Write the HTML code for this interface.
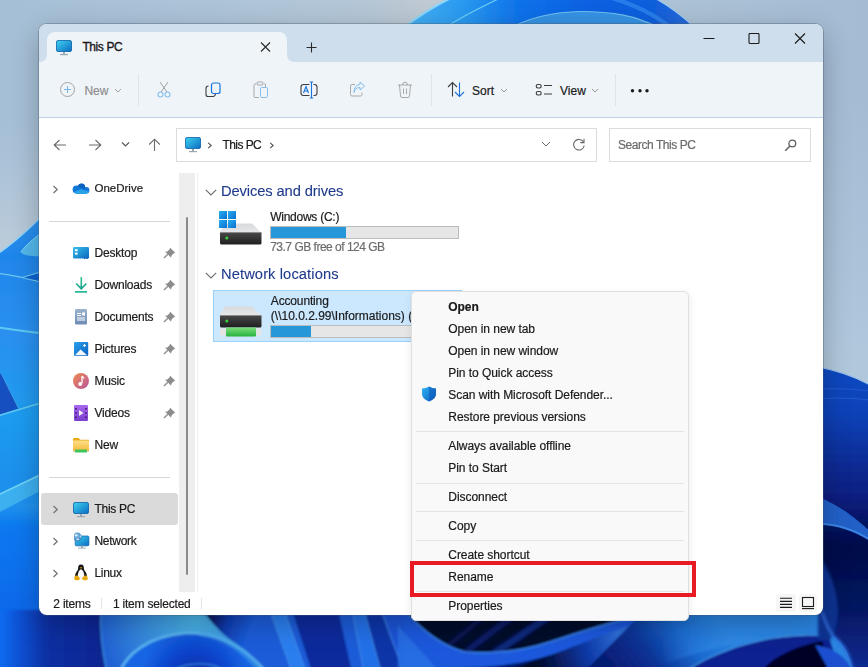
<!DOCTYPE html><html><head><meta charset="utf-8"><style>
html,body{margin:0;padding:0}
body{width:868px;height:667px;overflow:hidden;position:relative;font-family:"Liberation Sans", sans-serif;background:#a9c1d7}
.a{position:absolute}
.t{position:absolute;white-space:nowrap;-webkit-text-stroke:0.2px currentColor}
</style></head><body><svg class="a" style="left:0;top:0" width="868" height="667" viewBox="0 0 868 667">
<defs>
<linearGradient id="bg" gradientUnits="userSpaceOnUse" x1="0" y1="0" x2="868" y2="0">
<stop offset="0" stop-color="#a7c0d7"/><stop offset="0.3" stop-color="#aec3d8"/><stop offset="0.46" stop-color="#c2cad2"/><stop offset="0.8" stop-color="#b4c4d2"/><stop offset="1" stop-color="#a5bfd7"/>
</linearGradient>
<linearGradient id="bgv" gradientUnits="userSpaceOnUse" x1="0" y1="0" x2="0" y2="667">
<stop offset="0" stop-color="#a3bed7"/><stop offset="0.55" stop-color="#aec6dc"/><stop offset="1" stop-color="#aec6dc"/>
</linearGradient>
<radialGradient id="bgr" gradientUnits="userSpaceOnUse" cx="430" cy="8" r="70">
<stop offset="0" stop-color="#c0cad3" stop-opacity="1"/><stop offset="0.6" stop-color="#bac7d3" stop-opacity="0.6"/><stop offset="1" stop-color="#b0c4d6" stop-opacity="0"/>
</radialGradient>
<linearGradient id="topg" gradientUnits="userSpaceOnUse" x1="405" y1="0" x2="692" y2="0">
<stop offset="0" stop-color="#46b2f4"/><stop offset="0.2" stop-color="#2a9af0"/><stop offset="0.4" stop-color="#0f72ea"/><stop offset="0.65" stop-color="#0a60e0"/><stop offset="0.85" stop-color="#0d5edc"/><stop offset="1" stop-color="#2a6ad8"/>
</linearGradient>
<linearGradient id="leftg" gradientUnits="userSpaceOnUse" x1="0" y1="215" x2="0" y2="615">
<stop offset="0" stop-color="#2e94f0"/><stop offset="0.1" stop-color="#1f86ea"/><stop offset="0.3" stop-color="#2a90f0"/><stop offset="0.5" stop-color="#1e9cf0"/><stop offset="0.65" stop-color="#1a90ec"/><stop offset="0.73" stop-color="#2090ee"/><stop offset="0.78" stop-color="#0a78f0"/><stop offset="1" stop-color="#0868ea"/>
</linearGradient>
<linearGradient id="botL" gradientUnits="userSpaceOnUse" x1="0" y1="0" x2="104" y2="0">
<stop offset="0" stop-color="#0a6cf0"/><stop offset="0.15" stop-color="#0a56da"/><stop offset="0.45" stop-color="#0a30a2"/><stop offset="1" stop-color="#0a2590"/>
</linearGradient>
<linearGradient id="petA" gradientUnits="userSpaceOnUse" x1="104" y1="0" x2="270" y2="0">
<stop offset="0" stop-color="#2260d0"/><stop offset="0.35" stop-color="#3a9ce0"/><stop offset="0.6" stop-color="#40a6e4"/><stop offset="1" stop-color="#1a60e0"/>
</linearGradient>
<linearGradient id="petB" gradientUnits="userSpaceOnUse" x1="0" y1="634" x2="0" y2="667">
<stop offset="0" stop-color="#0a4ad8"/><stop offset="1" stop-color="#0c48d0"/>
</linearGradient>
<linearGradient id="rightg" gradientUnits="userSpaceOnUse" x1="0" y1="368" x2="0" y2="667">
<stop offset="0" stop-color="#1048c0"/><stop offset="0.15" stop-color="#0e42b8"/><stop offset="0.3" stop-color="#0a2e98"/><stop offset="0.43" stop-color="#081e80"/><stop offset="0.6" stop-color="#040c48"/><stop offset="0.8" stop-color="#061660"/><stop offset="1" stop-color="#0a2a90"/>
</linearGradient>
<linearGradient id="brightband" gradientUnits="userSpaceOnUse" x1="570" y1="667" x2="640" y2="621">
<stop offset="0" stop-color="#061a70"/><stop offset="0.4" stop-color="#2a70e0"/><stop offset="0.55" stop-color="#3a80e8"/><stop offset="0.6" stop-color="#061a70"/><stop offset="1" stop-color="#061a70"/>
</linearGradient>
<linearGradient id="lightR" gradientUnits="userSpaceOnUse" x1="610" y1="672" x2="700" y2="600">
<stop offset="0" stop-color="#061a70"/><stop offset="0.35" stop-color="#0a3294"/><stop offset="0.7" stop-color="#1a6ad0"/><stop offset="1" stop-color="#2a84e0"/>
</linearGradient>
<linearGradient id="leftE" gradientUnits="userSpaceOnUse" x1="540" y1="672" x2="620" y2="640">
<stop offset="0" stop-color="#02082a"/><stop offset="0.6" stop-color="#0e3aa8"/><stop offset="1" stop-color="#2e6ed8"/>
</linearGradient>
<filter id="soft3" x="-5%" y="-50%" width="110%" height="200%"><feGaussianBlur stdDeviation="1.3"/></filter>
<linearGradient id="wedgeG" gradientUnits="userSpaceOnUse" x1="206" y1="612" x2="250" y2="630">
<stop offset="0" stop-color="#040a40"/><stop offset="0.5" stop-color="#0f3cb0"/><stop offset="1" stop-color="#1a5cd8"/>
</linearGradient>
<linearGradient id="bgl" gradientUnits="userSpaceOnUse" x1="0" y1="120" x2="0" y2="260">
<stop offset="0" stop-color="#b6c9db" stop-opacity="0"/><stop offset="1" stop-color="#bfcdda" stop-opacity="1"/>
</linearGradient>
<radialGradient id="petAr" gradientUnits="userSpaceOnUse" cx="195" cy="618" r="95">
<stop offset="0" stop-color="#4ab4e6"/><stop offset="0.45" stop-color="#3a94e0"/><stop offset="1" stop-color="#2262d4"/>
</radialGradient>
<radialGradient id="petBr" gradientUnits="userSpaceOnUse" cx="195" cy="680" r="55">
<stop offset="0" stop-color="#0a2a9a"/><stop offset="0.5" stop-color="#0c40c8"/><stop offset="1" stop-color="#1666e4"/>
</radialGradient>
<linearGradient id="bgh" gradientUnits="userSpaceOnUse" x1="0" y1="0" x2="868" y2="0">
<stop offset="0" stop-color="#a5bfd6"/><stop offset="0.25" stop-color="#adc4d8"/><stop offset="0.4" stop-color="#b3c6d7"/><stop offset="0.48" stop-color="#b9c7d3"/><stop offset="0.8" stop-color="#abc1d5"/><stop offset="1" stop-color="#a3bcd4"/>
</linearGradient>
<linearGradient id="bgrs" gradientUnits="userSpaceOnUse" x1="0" y1="100" x2="0" y2="390">
<stop offset="0" stop-color="#b0c8dc" stop-opacity="0"/><stop offset="1" stop-color="#b2c9dd" stop-opacity="1"/>
</linearGradient>
<linearGradient id="lightV" gradientUnits="userSpaceOnUse" x1="0" y1="615" x2="0" y2="660">
<stop offset="0" stop-color="#2a80e0" stop-opacity="0"/><stop offset="1" stop-color="#3c94ec" stop-opacity="0.9"/>
</linearGradient>
<linearGradient id="mHg" gradientUnits="userSpaceOnUse" x1="660" y1="0" x2="730" y2="0">
<stop offset="0" stop-color="#fff" stop-opacity="0"/><stop offset="1" stop-color="#fff" stop-opacity="1"/>
</linearGradient>
<mask id="mH" maskUnits="userSpaceOnUse" x="0" y="0" width="868" height="667"><rect x="0" y="0" width="868" height="667" fill="url(#mHg)"/></mask>
<filter id="soft" x="-5%" y="-5%" width="110%" height="110%"><feGaussianBlur stdDeviation="0.6"/></filter>
<filter id="soft2" x="-20%" y="-20%" width="140%" height="140%"><feGaussianBlur stdDeviation="1.5"/></filter>
</defs>
<rect width="868" height="667" fill="url(#bgh)"/>
<rect x="800" y="100" width="68" height="290" fill="url(#bgrs)"/>
<rect width="868" height="667" fill="url(#bgr)"/>
<rect x="0" y="120" width="60" height="140" fill="url(#bgl)"/>
<g filter="url(#soft)">
<!-- ===== top dome ===== -->
<path d="M403 28 C416 18 430 8 451 -2 L655 -2 C672 8 684 17 695 28 Z" fill="url(#topg)"/>
<path d="M403 28 C416 18 430 8 451 -2" fill="none" stroke="#8cd6f8" stroke-width="2"/>
<path d="M655 -2 C672 8 684 17 695 28" fill="none" stroke="#a0cdf0" stroke-width="1.2"/>
<path d="M500 -2 C484 6 466 14 446 27" fill="none" stroke="#6ed0f5" stroke-width="1.3"/>
<path d="M612 -2 C638 6 655 15 670 27" fill="none" stroke="#2f84ee" stroke-width="4" opacity="0.8"/>
<path d="M512 27 C530 18 550 12 580 11.5 C615 11.5 635 16 658 27 Z" fill="#3592e4"/>
<path d="M512 27 C530 18 550 12 580 11.5 C615 11.5 635 16 658 27" fill="none" stroke="#70bff0" stroke-width="1.2"/>
<!-- ===== left ===== -->
<path d="M-4 255 C10 246 26 232 44 214 L44 620 L-4 620 Z" fill="url(#leftg)"/>
<path d="M-4 255 C10 246 26 232 44 214" fill="none" stroke="#8fd4f6" stroke-width="1.3"/>
<path d="M44 231 C34 238 25 246 21 252 C22 255.5 32 256.5 44 256.5 Z" fill="#52b8ec"/>
<path d="M44 231 C34 238 25 246 21 252" fill="none" stroke="#8adaf8" stroke-width="1"/>
<path d="M22 277.5 L44 271 L44 283 Z" fill="#0c62d2"/>
<path d="M-4 273 C10 275 18 276 24 278 C30 279.5 36 281 44 282.5 M22 277.5 L44 271" fill="none" stroke="#6cc8f0" stroke-width="1.2"/>
<path d="M-4 327 C15 330 28 332 44 333.5" fill="none" stroke="#5ccbf0" stroke-width="1.8"/>
<path d="M-4 371 L2 375 L18.5 408.5 L-4 416 Z" fill="#1450c0"/>
<path d="M2 375 L18.5 408.5" fill="none" stroke="#5ab8f0" stroke-width="0.8" opacity="0.7"/>
<path d="M-4 416.5 L44 402" fill="none" stroke="#60c8f0" stroke-width="1.6"/>
<path d="M-4 496 L44 473 L44 489 L-4 514 Z" fill="#3eb0f0"/>
<path d="M-4 496 L44 473" fill="none" stroke="#70d2f5" stroke-width="1.6"/>
<!-- ===== bottom ===== -->
</g>
<g filter="url(#soft3)">
<rect x="-4" y="610" width="876" height="62" fill="#0a2a98"/>
<rect x="-4" y="610" width="110" height="62" fill="url(#botL)"/>
<!-- petal A -->
<path d="M101 610 C100 630 102 650 107 672 L300 672 L300 610 Z" fill="url(#petAr)"/>
<path d="M101 610 C100 630 102 650 107 672" fill="none" stroke="#3a88e0" stroke-width="1.5"/>
<!-- blue region right of petal A -->
<path d="M202 610 C210 620 218 630 228 638 C242 648 255 658 266 672 L345 672 L338 610 Z" fill="url(#wedgeG)"/>
<!-- petal B -->
<path d="M120 672 C126 655 148 636 185 633 C210 632 228 640 245 652 C253 658 260 665 266 672 Z" fill="url(#petBr)"/>
<path d="M170 672 C185 662 210 660 228 672" fill="none" stroke="#3a90e8" stroke-width="1.2"/>
<path d="M120 672 C126 655 148 636 185 633 C210 632 228 640 245 652 C253 658 260 665 266 672" fill="none" stroke="#5ab8f0" stroke-width="2.5"/>
<path d="M200 633 C225 636 245 650 262 672" fill="none" stroke="#46a4e8" stroke-width="6" opacity="0.5"/>
<!-- stripes -->
<path d="M270 610 L284 610 L306 672 L292 672 Z" fill="#2a7eee"/>
<path d="M292 610 L338 610 L352 672 L312 672 Z" fill="#0a2c9c"/>
<path d="M338 610 L352 610 L364 672 L352 672 Z" fill="#1a5cd8"/>
<path d="M352 610 L364 610 L381 672 L364 672 Z" fill="#2270e8"/>
<path d="M364 610 L381 610 L404 672 L381 672 Z" fill="#0c34a8"/>
<path d="M381 610 L412 610 L440 672 L404 672 Z" fill="#1a52d4"/>
<path d="M270 610 L292 672 M284 610 L306 672 M352 610 L364 672 M364 610 L381 672 M381 610 L404 672" fill="none" stroke="#4a98f0" stroke-width="1.2" opacity="0.7"/>
<!-- right part base -->
<rect x="405" y="610" width="467" height="62" fill="#061a70"/>
<path d="M404 610 L645 610 L645 616 C610 622 580 632 550 642 C520 652 490 654 465 652 C440 646 420 628 404 610 Z" fill="#02082a"/>
<g filter="url(#soft2)">
<path d="M445 648 C458 638 470 628 484 616" fill="none" stroke="#0a1c66" stroke-width="5" opacity="0.7"/>
<path d="M466 652 C480 641 496 628 514 616" fill="none" stroke="#0e2a84" stroke-width="6" opacity="0.75"/>
<path d="M494 653 C512 642 530 628 550 616" fill="none" stroke="#143aa6" stroke-width="7" opacity="0.7"/>
</g>
<!-- region left of edge E below band -->
<path d="M500 672 C540 660 590 640 645 612 L584 672 Z" fill="url(#leftE)"/>
<!-- blue band -->
<path d="M404 610 C420 628 440 646 465 652 C490 654 520 652 550 642 C580 632 610 622 645 614 L636 624 C600 634 570 650 540 658 C510 666 480 668 450 668 L420 672 L404 672 Z" fill="#1c58dc"/>
<path d="M404 610 C420 628 440 646 465 652 C490 654 520 652 550 642 C580 632 610 622 645 614" fill="none" stroke="#3a80e8" stroke-width="1.5"/>
<path d="M398 625 C410 640 425 655 440 672 L398 672 Z" fill="#2a72e4" opacity="0.8"/>
<!-- right of edge E -->
<path d="M645 610 L872 610 L872 672 L584 672 Z" fill="url(#lightR)"/>
<path d="M640 672 C700 650 740 642 770 636 C800 632 815 632 829 634 L829 612 L660 612 Z" fill="url(#lightV)" mask="url(#mH)"/>
<path d="M685 672 C710 655 740 645 770 639 C800 635 815 635 829 637" fill="none" stroke="#4a9cec" stroke-width="2"/>
<path d="M685 672 C710 655 740 645 770 639 C800 635 815 635 829 637 L840 672 Z" fill="#0a2090"/>
<path d="M760 672 C775 655 800 645 822 641 L835 672 Z" fill="#020626"/>
<path d="M815 645 C835 648 848 658 852 672 L830 672 Z" fill="#1a50d0"/>
</g>
<g filter="url(#soft)">
<!-- ===== right ===== -->
<path d="M818 367 C835 370 852 375 872 386 L872 672 L853 672 C851 658 846 648 838 640 C830 634 826 625 818 600 Z" fill="url(#rightg)"/>
<path d="M818 367 C835 370 852 375 872 386" fill="none" stroke="#9cc4ec" stroke-width="1.2"/>
<path d="M818 389 C840 388 855 389 872 391 M818 399 C840 397 855 398 872 400" fill="none" stroke="#2a62d0" stroke-width="1.2" opacity="0.6"/>
<path d="M818 497 C840 505 858 520 872 533 L872 541 C855 530 840 525 818 523 Z" fill="#2060c8"/>
<path d="M818 523.5 C840 525 855 530 872 541" fill="none" stroke="#3a84e4" stroke-width="2"/>
<path d="M818 556 C830 570 838 590 838 612 C838 625 834 634 830 640 L818 640 Z" fill="#0a3090" filter="url(#soft2)"/>
<path d="M822 612 C826 625 830 634 838 640 C846 648 851 658 853 672" fill="none" stroke="#2f6ad8" stroke-width="2.5" filter="url(#soft2)"/>
</g>
</svg>

<div class="a" style="left:39px;top:24px;width:784px;height:591px;background:#ffffff;border-radius:8px;box-shadow:0 0 0 1px rgba(70,90,110,0.38),0 8px 28px rgba(0,0,0,0.26);overflow:hidden"></div>
<div class="a" style="left:39px;top:24px;width:784px;height:38px;background:#cedeec;border-radius:8px 8px 0 0"></div>
<div class="a" style="left:39px;top:62px;width:784px;height:56px;background:#eff4f9"></div>
<div class="a" style="left:39px;top:117px;width:784px;height:1px;background:#c0d0e0"></div>
<div class="a" style="left:47px;top:32px;width:240px;height:31px;background:#eff4f9;border-radius:8px 8px 0 0"></div>
<svg class="a" style="left:39px;top:54px;" width="8" height="8" viewBox="0 0 8 8"><path d="M0 8 L8 8 L8 0 Q8 8 0 8 Z" fill="#eff4f9"/></svg>
<svg class="a" style="left:287px;top:54px;" width="8" height="8" viewBox="0 0 8 8"><path d="M0 0 L0 8 L8 8 Q0 8 0 0 Z" fill="#eff4f9"/></svg>
<svg class="a" style="left:56px;top:40px;" width="16" height="16" viewBox="0 0 16 16"><defs><linearGradient id="mg5640" x1="0" y1="0" x2="1" y2="1"><stop offset="0" stop-color="#3fd3ee"/><stop offset="1" stop-color="#0b6cc4"/></linearGradient></defs>
<rect x="0.5" y="0.5" width="15" height="11" rx="1.5" fill="url(#mg5640)" stroke="#0a5fa8" stroke-width="0.8"/>
<rect x="7.0" y="12" width="2" height="2" fill="#9aa8b4"/><rect x="4.0" y="14" width="8" height="1.2" fill="#9aa8b4"/></svg>
<div class="t" style="left:82.4px;top:41.44px;font-size:12px;line-height:12px;color:#1a1a1a;font-weight:normal;letter-spacing:-0.4px;-webkit-text-stroke:0.35px #1a1a1a">This PC</div>
<svg class="a" style="left:260px;top:42px;" width="11" height="10" viewBox="0 0 11 10"><path d="M1 0.5 L10 9.5 M10 0.5 L1 9.5" stroke="#2a2a2a" stroke-width="1.1"/></svg>
<svg class="a" style="left:306px;top:42px;" width="11" height="11" viewBox="0 0 11 11"><path d="M5.5 0.5 V10.5 M0.5 5.5 H10.5" stroke="#2a2a2a" stroke-width="1.1"/></svg>
<svg class="a" style="left:703px;top:37px;" width="12" height="3" viewBox="0 0 12 3"><path d="M0.5 1.5 H11.5" stroke="#1a1a1a" stroke-width="1"/></svg>
<svg class="a" style="left:748px;top:33px;" width="12" height="11" viewBox="0 0 12 11"><rect x="1" y="0.5" width="10" height="10" rx="1" fill="none" stroke="#1a1a1a" stroke-width="1.1"/></svg>
<svg class="a" style="left:794px;top:33px;" width="12" height="11" viewBox="0 0 12 11"><path d="M1 0.5 L11 10.5 M11 0.5 L1 10.5" stroke="#1a1a1a" stroke-width="1.1"/></svg>
<svg class="a" style="left:59px;top:81px;" width="17" height="17" viewBox="0 0 17 17"><circle cx="8.5" cy="8.5" r="7" fill="none" stroke="#a3a3a3" stroke-width="1"/><path d="M8.5 5 V12 M5 8.5 H12" stroke="#7ab4e6" stroke-width="1"/></svg>
<div class="t" style="left:84.4px;top:85.04px;font-size:12px;line-height:12px;color:#8f8f8f;font-weight:normal;">New</div>
<svg class="a" style="left:114px;top:88px;" width="8" height="5" viewBox="0 0 8 5"><path d="M1 1 L4 4 L7 1" fill="none" stroke="#9a9a9a" stroke-width="0.9"/></svg>
<div class="a" style="left:138px;top:74px;width:1px;height:32px;background:#dfe4ea"></div>
<svg class="a" style="left:156px;top:81px;" width="16" height="17" viewBox="0 0 16 17"><path d="M4 1 L11 11 M12 1 L5 11" stroke="#a0a0a0" stroke-width="1"/><circle cx="4.5" cy="13.5" r="2.5" fill="none" stroke="#86bdeb" stroke-width="1.1"/><circle cx="11.5" cy="13.5" r="2.5" fill="none" stroke="#86bdeb" stroke-width="1.1"/></svg>
<svg class="a" style="left:205px;top:82px;" width="16" height="16" viewBox="0 0 16 16"><path d="M3.5 4 Q1 4 1 6.5 V12.5 Q1 14.5 3 14.5 H8 Q10 14.5 10.5 12" fill="none" stroke="#3c3c3c" stroke-width="1.1"/><rect x="6.5" y="1" width="8.5" height="10.5" rx="2" fill="none" stroke="#1a73d9" stroke-width="1.2"/></svg>
<svg class="a" style="left:253px;top:81px;" width="16" height="18" viewBox="0 0 16 18"><path d="M3 3 H2 Q1 3 1 4.5 V15.5 Q1 16.5 2 16.5 H6 M11 3 H12 Q12.5 3 12.5 4 V6" fill="none" stroke="#a8a8a8" stroke-width="1"/><rect x="4" y="1" width="6" height="3" rx="1" fill="none" stroke="#a8a8a8" stroke-width="1"/><rect x="7.5" y="6.5" width="7" height="10" rx="1.2" fill="none" stroke="#86bdeb" stroke-width="1"/></svg>
<svg class="a" style="left:300px;top:81px;" width="18" height="18" viewBox="0 0 18 18"><path d="M9.5 3.5 H3.5 Q1 3.5 1 6 V12 Q1 14.5 3.5 14.5 H9.5 M13.5 3.5 H14.5 Q17 3.5 17 6 V12 Q17 14.5 14.5 14.5 H13.5" fill="none" stroke="#3c3c3c" stroke-width="1.1"/><path d="M3.5 12 L6 5.5 L8.5 12 M4.3 10 H7.7" fill="none" stroke="#1a73d9" stroke-width="1.1"/><path d="M11.5 1 V17 M9.8 1 H13.2 M9.8 17 H13.2" stroke="#1a73d9" stroke-width="1.1"/></svg>
<svg class="a" style="left:349px;top:81px;" width="17" height="17" viewBox="0 0 17 17"><path d="M6 3.5 H3 Q1.5 3.5 1.5 5 V13.5 Q1.5 15 3 15 H11.5 Q13 15 13 13.5 V11.5" fill="none" stroke="#a8a8a8" stroke-width="1"/><path d="M5 11.5 Q6 6.5 11 6.5 V9 L15.5 5 L11 1 V3.5 Q5 4 5 11.5 Z" fill="none" stroke="#86bdeb" stroke-width="1"/></svg>
<svg class="a" style="left:397px;top:81px;" width="16" height="18" viewBox="0 0 16 18"><path d="M1 4 H15 M5.5 4 Q5.5 1.2 8 1.2 Q10.5 1.2 10.5 4 M2.5 4 L3.5 15 Q3.7 16.5 5 16.5 H11 Q12.3 16.5 12.5 15 L13.5 4 M6.5 7.5 V13 M9.5 7.5 V13" fill="none" stroke="#a8a8a8" stroke-width="1"/></svg>
<div class="a" style="left:431px;top:74px;width:1px;height:32px;background:#dfe4ea"></div>
<svg class="a" style="left:447px;top:81px;" width="19" height="17" viewBox="0 0 19 17"><path d="M5.5 15.5 V1.5 M1 6 L5.5 1.5 L10 6" fill="none" stroke="#3c3c3c" stroke-width="1.1"/><path d="M12.5 1.5 V15.5 M8 11 L12.5 15.5 L17 11" fill="none" stroke="#1a73d9" stroke-width="1.1"/></svg>
<div class="t" style="left:472px;top:85.04px;font-size:12px;line-height:12px;color:#1b1b1b;font-weight:normal;">Sort</div>
<svg class="a" style="left:500px;top:88px;" width="8" height="5" viewBox="0 0 8 5"><path d="M1 1 L4 4 L7 1" fill="none" stroke="#8a8a8a" stroke-width="0.9"/></svg>
<svg class="a" style="left:535px;top:83px;" width="18" height="14" viewBox="0 0 18 14"><rect x="1.2" y="1.5" width="5" height="3.5" rx="1.7" fill="none" stroke="#3c3c3c" stroke-width="1.1"/><rect x="1.2" y="8.5" width="5" height="3.5" rx="1.7" fill="none" stroke="#3c3c3c" stroke-width="1.1"/><path d="M9 2.5 H17 M9 11 H17" stroke="#3c3c3c" stroke-width="1.1"/></svg>
<div class="t" style="left:560px;top:85.04px;font-size:12px;line-height:12px;color:#1b1b1b;font-weight:normal;">View</div>
<svg class="a" style="left:591px;top:88px;" width="8" height="5" viewBox="0 0 8 5"><path d="M1 1 L4 4 L7 1" fill="none" stroke="#8a8a8a" stroke-width="0.9"/></svg>
<div class="a" style="left:615px;top:74px;width:1px;height:32px;background:#dfe4ea"></div>
<svg class="a" style="left:629px;top:88px;" width="22" height="6" viewBox="0 0 22 6"><circle cx="3.5" cy="2.8" r="1.7" fill="#1b1b1b"/><circle cx="11" cy="2.8" r="1.7" fill="#1b1b1b"/><circle cx="18" cy="2.8" r="1.7" fill="#1b1b1b"/></svg>
<svg class="a" style="left:53px;top:139px;" width="14" height="12" viewBox="0 0 14 12"><path d="M13 6 H1.5 M6.5 1 L1.2 6 L6.5 11" fill="none" stroke="#6a6a6a" stroke-width="1.1"/></svg>
<svg class="a" style="left:88px;top:139px;" width="14" height="12" viewBox="0 0 14 12"><path d="M1 6 H12.5 M7.5 1 L12.8 6 L7.5 11" fill="none" stroke="#6a6a6a" stroke-width="1.1"/></svg>
<svg class="a" style="left:121px;top:141px;" width="9" height="7" viewBox="0 0 9 7"><path d="M1 1.5 L4.5 5 L8 1.5" fill="none" stroke="#5a5a5a" stroke-width="1.2"/></svg>
<svg class="a" style="left:148px;top:138px;" width="13" height="14" viewBox="0 0 13 14"><path d="M6.5 13 V1.5 M1.2 6.5 L6.5 1.2 L11.8 6.5" fill="none" stroke="#6a6a6a" stroke-width="1.1"/></svg>
<div class="a" style="left:176px;top:128px;width:421px;height:34px;background:#fff;border:1px solid #dcdcdc;box-sizing:border-box"></div>
<svg class="a" style="left:185px;top:137px;" width="16" height="16" viewBox="0 0 16 16"><defs><linearGradient id="mg185137" x1="0" y1="0" x2="1" y2="1"><stop offset="0" stop-color="#3fd3ee"/><stop offset="1" stop-color="#0b6cc4"/></linearGradient></defs>
<rect x="0.5" y="0.5" width="15" height="11" rx="1.5" fill="url(#mg185137)" stroke="#0a5fa8" stroke-width="0.8"/>
<rect x="7.0" y="12" width="2" height="2" fill="#9aa8b4"/><rect x="4.0" y="14" width="8" height="1.2" fill="#9aa8b4"/></svg>
<svg class="a" style="left:207px;top:142px;" width="6" height="7" viewBox="0 0 6 7"><path d="M1.2 0.8 L4.2 3.5 L1.2 6.2" fill="none" stroke="#505050" stroke-width="1.1"/></svg>
<div class="t" style="left:222.4px;top:138.64px;font-size:12px;line-height:12px;color:#1b1b1b;font-weight:normal;letter-spacing:-0.55px">This PC</div>
<svg class="a" style="left:269px;top:142px;" width="6" height="7" viewBox="0 0 6 7"><path d="M1.2 0.8 L4.2 3.5 L1.2 6.2" fill="none" stroke="#505050" stroke-width="1.1"/></svg>
<svg class="a" style="left:541px;top:141px;" width="10" height="6" viewBox="0 0 10 6"><path d="M1 1 L5 5 L9 1" fill="none" stroke="#6a6a6a" stroke-width="1"/></svg>
<svg class="a" style="left:572px;top:138px;" width="14" height="13" viewBox="0 0 14 13"><path d="M11.5 4 A5.3 5.3 0 1 0 12.2 7.5" fill="none" stroke="#6a6a6a" stroke-width="1.1"/><path d="M12 0.8 V4.6 H8.2" fill="none" stroke="#6a6a6a" stroke-width="1.1"/></svg>
<div class="a" style="left:609px;top:128px;width:202px;height:34px;background:#fff;border:1px solid #dcdcdc;box-sizing:border-box"></div>
<div class="t" style="left:618px;top:138.64px;font-size:12px;line-height:12px;color:#6b6b6b;font-weight:normal;letter-spacing:-0.45px">Search This PC</div>
<svg class="a" style="left:784px;top:139px;" width="13" height="13" viewBox="0 0 13 13"><circle cx="8.3" cy="4.5" r="3.4" fill="none" stroke="#606060" stroke-width="1.3"/><path d="M6 7 L1.2 11.8" stroke="#606060" stroke-width="1.5"/></svg>
<div class="a" style="left:179px;top:173px;width:16px;height:419px;background:#eeeeee"></div>
<div class="a" style="left:196.5px;top:173px;width:1px;height:419px;background:#f0f0f0"></div>
<div class="a" style="left:186px;top:217px;width:2px;height:358px;background:#8a8a8a;border-radius:1px"></div>
<svg class="a" style="left:52px;top:185.0px;" width="7" height="9" viewBox="0 0 7 9"><path d="M1.5 1 L5.2 4.5 L1.5 8" fill="none" stroke="#767676" stroke-width="1.3"/></svg>
<svg class="a" style="left:72px;top:183px;" width="18" height="12" viewBox="0 0 18 12"><defs><clipPath id="odc"><circle cx="4.6" cy="6.6" r="4"/><circle cx="9.4" cy="4.2" r="3.8"/><circle cx="14.2" cy="7.3" r="3.2"/><rect x="4.6" y="6" width="9.6" height="4.9"/></clipPath></defs><g clip-path="url(#odc)"><rect x="0" y="0" width="18" height="12" fill="#1078d6"/><path d="M5 3 L9 0 L14 2 L12.5 6.6 Z" fill="#0a62be"/><path d="M0 10 L8.6 6.2 L18 8.8 L18 12 L0 12 Z" fill="#2aa2ea"/></g></svg>
<div class="t" style="left:94.5px;top:182.97px;font-size:11.5px;line-height:11.5px;color:#1b1b1b;font-weight:normal;">OneDrive</div>
<div class="a" style="left:49px;top:221px;width:121px;height:1px;background:#d6d6d6"></div>
<div class="t" style="left:94.5px;top:246.84px;font-size:12px;line-height:12px;color:#1b1b1b;font-weight:normal;letter-spacing:-0.2px">Desktop</div>
<svg class="a" style="left:163px;top:247px;" width="13" height="12" viewBox="0 0 13 12"><path d="M7.2 0.8 L12.2 5.8 L10.6 6.6 L8.4 8.8 L8.2 10.8 L2.2 4.8 L4.2 4.6 L6.4 2.4 Z" fill="#8c8c8c"/><path d="M4.8 7.2 L1 11" stroke="#8c8c8c" stroke-width="1.3"/></svg>
<div class="t" style="left:94.5px;top:278.84px;font-size:12px;line-height:12px;color:#1b1b1b;font-weight:normal;letter-spacing:-0.2px">Downloads</div>
<svg class="a" style="left:163px;top:279px;" width="13" height="12" viewBox="0 0 13 12"><path d="M7.2 0.8 L12.2 5.8 L10.6 6.6 L8.4 8.8 L8.2 10.8 L2.2 4.8 L4.2 4.6 L6.4 2.4 Z" fill="#8c8c8c"/><path d="M4.8 7.2 L1 11" stroke="#8c8c8c" stroke-width="1.3"/></svg>
<div class="t" style="left:94.5px;top:310.84px;font-size:12px;line-height:12px;color:#1b1b1b;font-weight:normal;letter-spacing:-0.2px">Documents</div>
<svg class="a" style="left:163px;top:311px;" width="13" height="12" viewBox="0 0 13 12"><path d="M7.2 0.8 L12.2 5.8 L10.6 6.6 L8.4 8.8 L8.2 10.8 L2.2 4.8 L4.2 4.6 L6.4 2.4 Z" fill="#8c8c8c"/><path d="M4.8 7.2 L1 11" stroke="#8c8c8c" stroke-width="1.3"/></svg>
<div class="t" style="left:94.5px;top:342.84px;font-size:12px;line-height:12px;color:#1b1b1b;font-weight:normal;letter-spacing:-0.2px">Pictures</div>
<svg class="a" style="left:163px;top:343px;" width="13" height="12" viewBox="0 0 13 12"><path d="M7.2 0.8 L12.2 5.8 L10.6 6.6 L8.4 8.8 L8.2 10.8 L2.2 4.8 L4.2 4.6 L6.4 2.4 Z" fill="#8c8c8c"/><path d="M4.8 7.2 L1 11" stroke="#8c8c8c" stroke-width="1.3"/></svg>
<div class="t" style="left:94.5px;top:374.84px;font-size:12px;line-height:12px;color:#1b1b1b;font-weight:normal;letter-spacing:-0.2px">Music</div>
<svg class="a" style="left:163px;top:375px;" width="13" height="12" viewBox="0 0 13 12"><path d="M7.2 0.8 L12.2 5.8 L10.6 6.6 L8.4 8.8 L8.2 10.8 L2.2 4.8 L4.2 4.6 L6.4 2.4 Z" fill="#8c8c8c"/><path d="M4.8 7.2 L1 11" stroke="#8c8c8c" stroke-width="1.3"/></svg>
<div class="t" style="left:94.5px;top:406.84px;font-size:12px;line-height:12px;color:#1b1b1b;font-weight:normal;letter-spacing:-0.2px">Videos</div>
<svg class="a" style="left:163px;top:407px;" width="13" height="12" viewBox="0 0 13 12"><path d="M7.2 0.8 L12.2 5.8 L10.6 6.6 L8.4 8.8 L8.2 10.8 L2.2 4.8 L4.2 4.6 L6.4 2.4 Z" fill="#8c8c8c"/><path d="M4.8 7.2 L1 11" stroke="#8c8c8c" stroke-width="1.3"/></svg>
<div class="t" style="left:94.5px;top:438.84px;font-size:12px;line-height:12px;color:#1b1b1b;font-weight:normal;letter-spacing:-0.2px">New</div>
<svg class="a" style="left:73px;top:247px;" width="16" height="12" viewBox="0 0 16 12"><defs><linearGradient id="dk" x1="0" y1="0" x2="1" y2="1"><stop offset="0" stop-color="#36c0ea"/><stop offset="1" stop-color="#0a66c0"/></linearGradient></defs><rect x="0" y="0" width="16" height="11.5" rx="1.2" fill="url(#dk)"/><rect x="2" y="2.2" width="2.6" height="2" fill="#fff"/><rect x="2" y="5.6" width="2.6" height="2" fill="#fff"/><rect x="11" y="11" width="1.2" height="1" fill="#0a4f9a"/><rect x="13.5" y="11" width="1.2" height="1" fill="#0a4f9a"/></svg>
<svg class="a" style="left:75px;top:277px;" width="13" height="16" viewBox="0 0 13 16"><defs><linearGradient id="dl" x1="0" y1="0" x2="0" y2="1"><stop offset="0" stop-color="#2fc49a"/><stop offset="1" stop-color="#14a08a"/></linearGradient></defs><path d="M6.3 0 V11 M1.2 6.5 L6.3 11.8 L11.4 6.5" fill="none" stroke="url(#dl)" stroke-width="1.6"/><rect x="0" y="14" width="12" height="1.7" fill="#22b894"/></svg>
<svg class="a" style="left:75px;top:309px;" width="12" height="16" viewBox="0 0 12 16"><defs><linearGradient id="dc" x1="0" y1="0" x2="0" y2="1"><stop offset="0" stop-color="#9bb3cf"/><stop offset="1" stop-color="#6d8cb4"/></linearGradient></defs><rect x="0" y="0" width="12" height="15.5" rx="1.3" fill="url(#dc)"/><rect x="2" y="4" width="4" height="1" fill="#fff"/><rect x="2" y="6" width="4" height="1" fill="#fff"/><rect x="7" y="3.5" width="3" height="3" fill="#fff"/><rect x="2" y="8.5" width="8" height="1" fill="#fff"/><rect x="2" y="10.5" width="8" height="1" fill="#fff"/></svg>
<svg class="a" style="left:74px;top:342px;" width="15" height="14" viewBox="0 0 15 14"><defs><linearGradient id="pc" x1="0" y1="0" x2="1" y2="1"><stop offset="0" stop-color="#2aa0ec"/><stop offset="1" stop-color="#0a62c0"/></linearGradient></defs><rect x="0" y="0" width="14.2" height="14" rx="1.3" fill="url(#pc)"/><path d="M1 13.2 L6.5 7.5 L13.2 13.2 Z" fill="#f4f8fc"/><circle cx="10.5" cy="3.5" r="1.1" fill="#fff"/><path d="M10.5 2 V5 M9 3.5 H12" stroke="#fff" stroke-width="0.7"/></svg>
<svg class="a" style="left:73px;top:373px;" width="16" height="16" viewBox="0 0 16 16"><defs><linearGradient id="mu" x1="0" y1="0" x2="1" y2="1"><stop offset="0" stop-color="#f08a4e"/><stop offset="1" stop-color="#b8559e"/></linearGradient></defs><circle cx="8" cy="8" r="8" fill="url(#mu)"/><path d="M9 3.2 V10.5" stroke="#fff" stroke-width="1.3"/><path d="M9 3.2 Q10.5 4.5 11.2 5.5" stroke="#fff" stroke-width="1.2" fill="none"/><circle cx="7.2" cy="11" r="1.9" fill="#fff"/></svg>
<svg class="a" style="left:74px;top:405px;" width="14" height="16" viewBox="0 0 14 16"><defs><linearGradient id="vd" x1="0" y1="0" x2="0" y2="1"><stop offset="0" stop-color="#a766ee"/><stop offset="1" stop-color="#7a3ecf"/></linearGradient></defs><rect x="0" y="0" width="14" height="16" rx="1.3" fill="url(#vd)"/><g fill="#3a1f66"><rect x="1.2" y="3" width="1.6" height="1.6"/><rect x="1.2" y="7.2" width="1.6" height="1.6"/><rect x="1.2" y="11.4" width="1.6" height="1.6"/><rect x="11.2" y="3" width="1.6" height="1.6"/><rect x="11.2" y="7.2" width="1.6" height="1.6"/><rect x="11.2" y="11.4" width="1.6" height="1.6"/></g><path d="M5 5 L9.5 8 L5 11 Z" fill="#f0f0f0"/></svg>
<svg class="a" style="left:73px;top:438px;" width="16" height="15" viewBox="0 0 16 15"><defs><linearGradient id="fd" x1="0" y1="0" x2="0" y2="1"><stop offset="0" stop-color="#fde08a"/><stop offset="1" stop-color="#f5bb3a"/></linearGradient></defs><path d="M0 1.2 Q0 0 1.2 0 H5.5 L7.2 1.8 H16 V12.5 H0 Z" fill="#eaa813"/><rect x="0" y="2.5" width="16" height="10.5" rx="0.8" fill="url(#fd)"/><rect x="0" y="13" width="16" height="0.8" fill="#c8c8c8"/><rect x="2" y="11.6" width="12" height="3" rx="0.6" fill="#3fc45d"/></svg>
<div class="a" style="left:49px;top:477px;width:121px;height:1px;background:#d6d6d6"></div>
<div class="a" style="left:41px;top:493px;width:137px;height:32px;background:#dadada;border-radius:3px"></div>
<svg class="a" style="left:52px;top:504.5px;" width="7" height="9" viewBox="0 0 7 9"><path d="M1.5 1 L5.2 4.5 L1.5 8" fill="none" stroke="#767676" stroke-width="1.3"/></svg>
<div class="t" style="left:94.5px;top:502.84px;font-size:12px;line-height:12px;color:#1b1b1b;font-weight:normal;letter-spacing:-0.3px">This PC</div>
<svg class="a" style="left:52px;top:536.5px;" width="7" height="9" viewBox="0 0 7 9"><path d="M1.5 1 L5.2 4.5 L1.5 8" fill="none" stroke="#767676" stroke-width="1.3"/></svg>
<div class="t" style="left:94.5px;top:534.84px;font-size:12px;line-height:12px;color:#1b1b1b;font-weight:normal;letter-spacing:-0.3px">Network</div>
<svg class="a" style="left:52px;top:568.5px;" width="7" height="9" viewBox="0 0 7 9"><path d="M1.5 1 L5.2 4.5 L1.5 8" fill="none" stroke="#767676" stroke-width="1.3"/></svg>
<div class="t" style="left:94.5px;top:566.84px;font-size:12px;line-height:12px;color:#1b1b1b;font-weight:normal;letter-spacing:-0.3px">Linux</div>
<svg class="a" style="left:73px;top:502px;" width="16" height="16" viewBox="0 0 16 16"><defs><linearGradient id="mg73502" x1="0" y1="0" x2="1" y2="1"><stop offset="0" stop-color="#3fd3ee"/><stop offset="1" stop-color="#0b6cc4"/></linearGradient></defs>
<rect x="0.5" y="0.5" width="15" height="11" rx="1.5" fill="url(#mg73502)" stroke="#0a5fa8" stroke-width="0.8"/>
<rect x="7.0" y="12" width="2" height="2" fill="#9aa8b4"/><rect x="4.0" y="14" width="8" height="1.2" fill="#9aa8b4"/></svg>
<svg class="a" style="left:74px;top:531px;" width="16" height="18" viewBox="0 0 16 18"><defs><linearGradient id="nm" x1="0" y1="0" x2="1" y2="1"><stop offset="0" stop-color="#3fd3ee"/><stop offset="1" stop-color="#0b6cc4"/></linearGradient><radialGradient id="gl" cx="0.4" cy="0.35" r="0.7"><stop offset="0" stop-color="#8cc4ea"/><stop offset="1" stop-color="#2a78b8"/></radialGradient></defs><rect x="1.2" y="5" width="13.7" height="9.8" rx="1.2" fill="url(#nm)" stroke="#0a5fa8" stroke-width="0.7"/><rect x="7" y="14.8" width="2" height="2" fill="#9aa8b4"/><rect x="4.2" y="16.6" width="7.6" height="1" fill="#9aa8b4"/><circle cx="3.4" cy="6" r="4.4" fill="url(#gl)"/><ellipse cx="2.2" cy="4.2" rx="1.6" ry="1" fill="#e6f2fa" opacity="0.85"/><ellipse cx="3.8" cy="8.3" rx="1.5" ry="0.9" fill="#e6f2fa" opacity="0.85"/><ellipse cx="6.5" cy="5.5" rx="0.8" ry="1.2" fill="#e6f2fa" opacity="0.7"/></svg>
<svg class="a" style="left:74px;top:564px;" width="14" height="17" viewBox="0 0 14 17"><path d="M7 0.6 C9.2 0.6 9.9 2.2 9.9 4.2 C9.9 5.6 10.6 6.6 11.6 8.1 C12.9 10.1 13.2 12.2 12.5 14.2 L1.5 14.2 C0.8 12.2 1.1 10.1 2.4 8.1 C3.4 6.6 4.1 5.6 4.1 4.2 C4.1 2.2 4.8 0.6 7 0.6 Z" fill="#161616"/><path d="M7 5.2 C8.7 6 9.9 8.2 10.2 10.6 C10.4 12.6 9.9 14.2 8.8 14.8 L5.2 14.8 C4.1 14.2 3.6 12.6 3.8 10.6 C4.1 8.2 5.3 6 7 5.2 Z" fill="#fbfbfb"/><path d="M5.6 3.6 Q7 2.8 8.4 3.6 Q7 5.4 5.6 3.6 Z" fill="#e6a815"/><path d="M0.2 14.4 C0.3 12.2 1.8 11.2 3.4 11.7 C4.6 12.2 5.6 13.6 6 14.8 C5.2 16.2 3.1 16.6 1.6 16.1 C0.6 15.7 0.1 15.2 0.2 14.4 Z" fill="#e8a80c"/><path d="M13.8 14.4 C13.7 12.2 12.2 11.2 10.6 11.7 C9.4 12.2 8.4 13.6 8 14.8 C8.8 16.2 10.9 16.6 12.4 16.1 C13.4 15.7 13.9 15.2 13.8 14.4 Z" fill="#e8a80c"/></svg>
<svg class="a" style="left:204.5px;top:188.8px;" width="12" height="7" viewBox="0 0 12 7"><path d="M0.8 0.8 L6 6 L11.2 0.8" fill="none" stroke="#6e6e6e" stroke-width="1.15"/></svg>
<div class="t" style="left:221px;top:184.36px;font-size:14.7px;line-height:14.7px;color:#1e3a8c;font-weight:normal;letter-spacing:-0.1px;-webkit-text-stroke:0.1px #1e3a8c">Devices and drives</div>
<svg class="a" style="left:219px;top:223px;" width="43" height="22" viewBox="0 0 43 22"><defs><linearGradient id="dt223" x1="0" y1="0" x2="0" y2="1"><stop offset="0" stop-color="#d7d9dc"/><stop offset="1" stop-color="#e6e7e9"/></linearGradient><linearGradient id="df223" x1="0" y1="0" x2="0" y2="1"><stop offset="0" stop-color="#4a4a4a"/><stop offset="1" stop-color="#1f1f1f"/></linearGradient></defs><path d="M6 0.5 H33 L41.5 9 H1 Z" fill="url(#dt223)"/><rect x="1" y="9" width="41.5" height="12.5" rx="1.5" fill="url(#df223)"/><rect x="1" y="9" width="41.5" height="1" fill="#8a8a8a"/><circle cx="7.8" cy="15" r="1.5" fill="#34d33a"/></svg>
<svg class="a" style="left:219px;top:211px;" width="17" height="17" viewBox="0 0 17 17"><defs><linearGradient id="wl" x1="0" y1="0" x2="1" y2="1"><stop offset="0" stop-color="#28aef0"/><stop offset="1" stop-color="#0a6fd0"/></linearGradient></defs><g fill="url(#wl)"><rect x="0" y="0" width="8" height="8"/><rect x="9" y="0" width="8" height="8"/><rect x="0" y="9" width="8" height="8"/><rect x="9" y="9" width="8" height="8"/></g></svg>
<div class="t" style="left:270.2px;top:210.74px;font-size:12px;line-height:12px;color:#1b1b1b;font-weight:normal;letter-spacing:-0.25px">Windows (C:)</div>
<div class="a" style="left:269.5px;top:226px;width:189px;height:13px;background:#e6e6e6;border:1px solid #bcbcbc;box-sizing:border-box"></div>
<div class="a" style="left:270.5px;top:227px;width:75.5px;height:11px;background:#2698d9"></div>
<div class="t" style="left:270.2px;top:241.04px;font-size:12px;line-height:12px;color:#6d6d6d;font-weight:normal;letter-spacing:-0.5px">73.7 GB free of 124 GB</div>
<svg class="a" style="left:204.5px;top:271.8px;" width="12" height="7" viewBox="0 0 12 7"><path d="M0.8 0.8 L6 6 L11.2 0.8" fill="none" stroke="#6e6e6e" stroke-width="1.15"/></svg>
<div class="t" style="left:221px;top:266.96px;font-size:14.7px;line-height:14.7px;color:#1e3a8c;font-weight:normal;letter-spacing:0.1px;-webkit-text-stroke:0.1px #1e3a8c">Network locations</div>
<div class="a" style="left:213px;top:290px;width:249px;height:52px;background:#cce8ff;border:1px solid #99d1ff;box-sizing:border-box"></div>
<svg class="a" style="left:219px;top:306px;" width="43" height="22" viewBox="0 0 43 22"><defs><linearGradient id="dt306" x1="0" y1="0" x2="0" y2="1"><stop offset="0" stop-color="#d7d9dc"/><stop offset="1" stop-color="#e6e7e9"/></linearGradient><linearGradient id="df306" x1="0" y1="0" x2="0" y2="1"><stop offset="0" stop-color="#4a4a4a"/><stop offset="1" stop-color="#1f1f1f"/></linearGradient></defs><path d="M6 0.5 H33 L41.5 9 H1 Z" fill="url(#dt306)"/><rect x="1" y="9" width="41.5" height="12.5" rx="1.5" fill="url(#df306)"/><rect x="1" y="9" width="41.5" height="1" fill="#8a8a8a"/><circle cx="7.8" cy="15" r="1.5" fill="#34d33a"/></svg>
<svg class="a" style="left:219px;top:327px;" width="43" height="10" viewBox="0 0 43 10"><defs><linearGradient id="gc" x1="0" y1="0" x2="0" y2="1"><stop offset="0" stop-color="#7be07a"/><stop offset="1" stop-color="#28b040"/></linearGradient></defs><rect x="1" y="1.5" width="41.5" height="7" rx="1.5" fill="#e4e4e4"/><rect x="7" y="0.5" width="30" height="9" rx="1" fill="url(#gc)"/></svg>
<div class="t" style="left:270.8px;top:294.84px;font-size:12px;line-height:12px;color:#1b1b1b;font-weight:normal;letter-spacing:-0.15px">Accounting</div>
<div class="t" style="left:270.8px;top:309.84px;font-size:12px;line-height:12px;color:#1b1b1b;font-weight:normal;letter-spacing:0px">(\\10.0.2.99\Informations) (</div>
<div class="a" style="left:269.5px;top:325px;width:189px;height:13px;background:#e6e6e6;border:1px solid #bcbcbc;box-sizing:border-box"></div>
<div class="a" style="left:270.5px;top:326px;width:40.5px;height:11px;background:#2698d9"></div>
<div class="t" style="left:53.3px;top:597.74px;font-size:12px;line-height:12px;color:#1b1b1b;font-weight:normal;letter-spacing:-0.2px">2 items</div>
<div class="a" style="left:101px;top:598px;width:1px;height:11px;background:#e3e3e3"></div>
<div class="t" style="left:112.9px;top:597.74px;font-size:12px;line-height:12px;color:#1b1b1b;font-weight:normal;letter-spacing:-0.2px">1 item selected</div>
<div class="a" style="left:201px;top:598px;width:1px;height:11px;background:#e3e3e3"></div>
<div class="a" style="left:776px;top:594px;width:20px;height:18px;background:#f6f6f6;border-radius:3px"></div>
<div class="a" style="left:799px;top:594px;width:18px;height:18px;background:#f6f6f6;border-radius:3px"></div>
<svg class="a" style="left:779px;top:597px;" width="14" height="12" viewBox="0 0 14 12"><path d="M1 1.3 H13 M1 4.4 H13 M1 7.4 H13 M1 10.4 H13" stroke="#1a1a1a" stroke-width="1.1"/></svg>
<svg class="a" style="left:801px;top:596px;" width="14" height="14" viewBox="0 0 14 14"><rect x="1.5" y="1.5" width="11" height="9" fill="none" stroke="#1a1a1a" stroke-width="1.1"/><path d="M1 12.6 H13" stroke="#1a1a1a" stroke-width="1.1"/></svg>
<div class="a" style="left:411px;top:291px;width:278px;height:330px;background:#f9f9f9;border:1px solid #e0e0e0;box-sizing:border-box;border-radius:5px;box-shadow:0 3px 10px rgba(0,0,0,0.09)"></div>
<div class="t" style="left:448.3px;top:301.04px;font-size:12px;line-height:12px;color:#1a1a1a;font-weight:bold;letter-spacing:-0.05px">Open</div>
<div class="t" style="left:448.3px;top:323.04px;font-size:12px;line-height:12px;color:#1a1a1a;font-weight:normal;letter-spacing:-0.05px">Open in new tab</div>
<div class="t" style="left:448.3px;top:345.04px;font-size:12px;line-height:12px;color:#1a1a1a;font-weight:normal;letter-spacing:-0.05px">Open in new window</div>
<div class="t" style="left:448.3px;top:366.84px;font-size:12px;line-height:12px;color:#1a1a1a;font-weight:normal;letter-spacing:-0.05px">Pin to Quick access</div>
<div class="t" style="left:448.3px;top:388.84px;font-size:12px;line-height:12px;color:#1a1a1a;font-weight:normal;letter-spacing:-0.05px">Scan with Microsoft Defender...</div>
<div class="t" style="left:448.3px;top:410.64px;font-size:12px;line-height:12px;color:#1a1a1a;font-weight:normal;letter-spacing:-0.05px">Restore previous versions</div>
<div class="t" style="left:448.3px;top:439.64px;font-size:12px;line-height:12px;color:#1a1a1a;font-weight:normal;letter-spacing:-0.05px">Always available offline</div>
<div class="t" style="left:448.3px;top:461.64px;font-size:12px;line-height:12px;color:#1a1a1a;font-weight:normal;letter-spacing:-0.05px">Pin to Start</div>
<div class="t" style="left:448.3px;top:491.04px;font-size:12px;line-height:12px;color:#1a1a1a;font-weight:normal;letter-spacing:-0.05px">Disconnect</div>
<div class="t" style="left:448.3px;top:520.34px;font-size:12px;line-height:12px;color:#1a1a1a;font-weight:normal;letter-spacing:-0.05px">Copy</div>
<div class="t" style="left:448.3px;top:548.64px;font-size:12px;line-height:12px;color:#1a1a1a;font-weight:normal;letter-spacing:-0.05px">Create shortcut</div>
<div class="t" style="left:448.3px;top:571.24px;font-size:12px;line-height:12px;color:#1a1a1a;font-weight:normal;letter-spacing:-0.05px">Rename</div>
<div class="t" style="left:448.3px;top:599.54px;font-size:12px;line-height:12px;color:#1a1a1a;font-weight:normal;letter-spacing:-0.05px">Properties</div>
<div class="a" style="left:416px;top:431px;width:268px;height:1px;background:#e3e3e3"></div>
<div class="a" style="left:416px;top:482.5px;width:268px;height:1px;background:#e3e3e3"></div>
<div class="a" style="left:416px;top:511.3px;width:268px;height:1px;background:#e3e3e3"></div>
<div class="a" style="left:416px;top:540.3px;width:268px;height:1px;background:#e3e3e3"></div>
<div class="a" style="left:416px;top:591px;width:268px;height:1px;background:#e3e3e3"></div>
<svg class="a" style="left:421px;top:386px;" width="16" height="16" viewBox="0 0 16 16"><defs><linearGradient id="sh" x1="0" y1="0" x2="1" y2="1"><stop offset="0" stop-color="#2fb4f5"/><stop offset="1" stop-color="#0a5cc0"/></linearGradient></defs><path d="M8 0.5 Q11 2.5 15 2.5 V8 Q15 13 8 15.5 Q1 13 1 8 V2.5 Q5 2.5 8 0.5 Z" fill="url(#sh)"/><path d="M8 0.5 V15.5 Q15 13 15 8 V2.5 Q11 2.5 8 0.5 Z" fill="#0b58b8" opacity="0.55"/></svg>
<div class="a" style="left:410px;top:561px;width:286px;height:36px;border:4px solid #e81b24;box-sizing:border-box"></div></body></html>
